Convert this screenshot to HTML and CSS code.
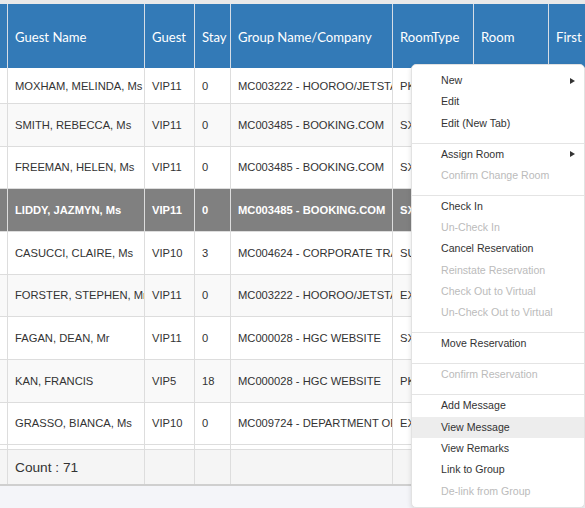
FILE: index.html
```html
<!DOCTYPE html>
<html>
<head>
<meta charset="utf-8">
<link rel="stylesheet" href="styles.css">
</head>
<body>
<div class="topbar"></div>
<div class="grid">
  <div class="row head">
    <div class="c"></div><div class="c">Guest Name</div><div class="c">Guest</div><div class="c">Stay</div><div class="c">Group Name/Company</div><div class="c">RoomType</div><div class="c">Room</div><div class="c">First</div>
  </div>
  <div class="row first">
    <div class="c"></div><div class="c">MOXHAM, MELINDA, Ms</div><div class="c">VIP11</div><div class="c">0</div><div class="c">MC003222 - HOOROO/JETSTAR</div><div class="c">PKD</div><div class="c"></div><div class="c"></div>
  </div>
  <div class="row odd">
    <div class="c"></div><div class="c">SMITH, REBECCA, Ms</div><div class="c">VIP11</div><div class="c">0</div><div class="c">MC003485 - BOOKING.COM</div><div class="c">SXK</div><div class="c"></div><div class="c"></div>
  </div>
  <div class="row">
    <div class="c"></div><div class="c">FREEMAN, HELEN, Ms</div><div class="c">VIP11</div><div class="c">0</div><div class="c">MC003485 - BOOKING.COM</div><div class="c">SXK</div><div class="c"></div><div class="c"></div>
  </div>
  <div class="row selected">
    <div class="c"></div><div class="c">LIDDY, JAZMYN, Ms</div><div class="c">VIP11</div><div class="c">0</div><div class="c">MC003485 - BOOKING.COM</div><div class="c">SXK</div><div class="c"></div><div class="c"></div>
  </div>
  <div class="row">
    <div class="c"></div><div class="c">CASUCCI, CLAIRE, Ms</div><div class="c">VIP10</div><div class="c">3</div><div class="c">MC004624 - CORPORATE TRAVEL</div><div class="c">SUK</div><div class="c"></div><div class="c"></div>
  </div>
  <div class="row odd">
    <div class="c"></div><div class="c">FORSTER, STEPHEN, Mr</div><div class="c">VIP11</div><div class="c">0</div><div class="c">MC003222 - HOOROO/JETSTAR</div><div class="c">EXK</div><div class="c"></div><div class="c"></div>
  </div>
  <div class="row">
    <div class="c"></div><div class="c">FAGAN, DEAN, Mr</div><div class="c">VIP11</div><div class="c">0</div><div class="c">MC000028 - HGC WEBSITE</div><div class="c">SXK</div><div class="c"></div><div class="c"></div>
  </div>
  <div class="row odd">
    <div class="c"></div><div class="c">KAN, FRANCIS</div><div class="c">VIP5</div><div class="c">18</div><div class="c">MC000028 - HGC WEBSITE</div><div class="c">PKD</div><div class="c"></div><div class="c"></div>
  </div>
  <div class="row">
    <div class="c"></div><div class="c">GRASSO, BIANCA, Ms</div><div class="c">VIP10</div><div class="c">0</div><div class="c">MC009724 - DEPARTMENT OF HEALTH</div><div class="c">EXK</div><div class="c"></div><div class="c"></div>
  </div>
  <div class="row gap">
    <div class="c"></div><div class="c"></div><div class="c"></div><div class="c"></div><div class="c"></div><div class="c"></div><div class="c"></div><div class="c"></div>
  </div>
  <div class="row foot">
    <div class="c"></div><div class="c">Count : 71</div><div class="c"></div><div class="c"></div><div class="c"></div><div class="c"></div><div class="c"></div><div class="c"></div>
  </div>
</div>

<div class="menu">
  <div class="item sub">New</div>
  <div class="item">Edit</div>
  <div class="item">Edit (New Tab)</div>
  <div class="sep"></div>
  <div class="item sub">Assign Room</div>
  <div class="item off">Confirm Change Room</div>
  <div class="sep"></div>
  <div class="item">Check In</div>
  <div class="item off">Un-Check In</div>
  <div class="item">Cancel Reservation</div>
  <div class="item off">Reinstate Reservation</div>
  <div class="item off">Check Out to Virtual</div>
  <div class="item off">Un-Check Out to Virtual</div>
  <div class="sep"></div>
  <div class="item">Move Reservation</div>
  <div class="sep"></div>
  <div class="item off">Confirm Reservation</div>
  <div class="sep"></div>
  <div class="item">Add Message</div>
  <div class="item hover">View Message</div>
  <div class="item">View Remarks</div>
  <div class="item">Link to Group</div>
  <div class="item off">De-link from Group</div>
</div>
</body>
</html>
```

FILE: styles.css
```css
html, body {
  margin: 0;
  padding: 0;
}
body {
  width: 585px;
  height: 508px;
  overflow: hidden;
  background: #f4f5f9;
  font-family: "Liberation Sans", Arial, sans-serif;
  color: #333;
  position: relative;
}
.topbar {
  height: 4px;
  background: #e9e9e9;
}
.grid {
  width: 585px;
  overflow: hidden;
  border-bottom: 2px solid #cfcfcf;
}
.row {
  display: grid;
  grid-template-columns: 8px 137px 50px 36px 162px 81px 75px 100px;
  box-sizing: border-box;
  height: 42.67px;
  border-bottom: 1px solid #dddddd;
  background: #fff;
  font-size: 11.2px;
}
.c {
  box-sizing: border-box;
  border-right: 1px solid #dddddd;
  padding-left: 7px;
  display: flex;
  align-items: center;
  white-space: nowrap;
  overflow: hidden;
}
.c:first-child {
  padding: 0;
}
.row.head {
  height: 64px;
  border-bottom: none;
  background: #337ab7;
  color: #fff;
  font-family: Lato, "Open Sans", sans-serif;
  font-size: 13.1px;
}
.row.head .c {
  border-right-color: #d6dde6;
  padding-top: 1px;
}
.row.first {
  height: 36px;
}
.row.odd {
  background: #f9f9f9;
}
.row.selected {
  background: #808080;
  color: #fff;
  font-weight: bold;
}
.row.gap {
  height: 5px;
}
.row.foot {
  height: 34px;
  border-bottom: none;
  background: #f5f5f5;
  font-size: 13.7px;
}
.menu {
  position: absolute;
  left: 411px;
  top: 64px;
  width: 174px;
  box-sizing: border-box;
  padding: 5px 0;
  background: #fff;
  border: 1px solid #e2e2e2;
  border-radius: 5px;
  box-shadow: 0 2px 5px rgba(0, 0, 0, 0.12);
  font-size: 10.6px;
  color: #333;
}
.item {
  height: 21.33px;
  line-height: 21.33px;
  padding-left: 29px;
  position: relative;
  white-space: nowrap;
}
.item.off {
  color: #bbb;
}
.item.hover {
  background: #ededed;
}
.item.sub::after {
  content: "";
  position: absolute;
  right: 9px;
  top: 7.5px;
  border-left: 5px solid #333;
  border-top: 3.5px solid transparent;
  border-bottom: 3.5px solid transparent;
}
.sep {
  height: 1px;
  background: #e4e4e4;
  margin: 8.6px 0 0;
}
```
